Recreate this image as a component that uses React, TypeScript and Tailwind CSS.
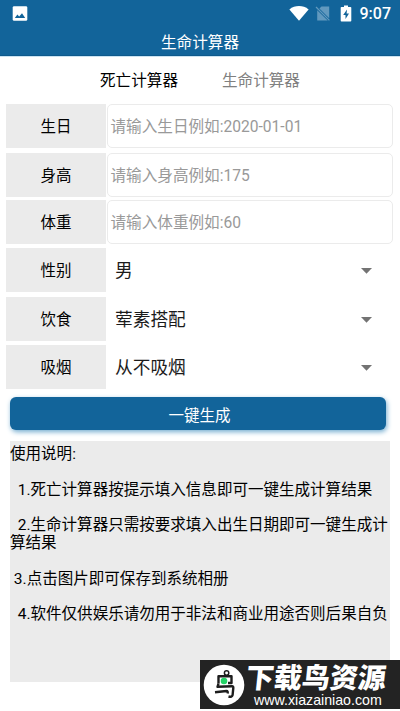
const inputs = [
    { label: "生日", hint: "请输入生日例如:2020-01-01" },
    { label: "身高", hint: "请输入身高例如:175" },
    { label: "体重", hint: "请输入体重例如:60" },
]

const selects = [
    { label: "性别", value: "男" },
    { label: "饮食", value: "荤素搭配" },
    { label: "吸烟", value: "从不吸烟" },
]

function StatusBar() {
    return (
        <div className="flex h-7 items-center pl-[12px] pr-[9px] text-white">
            <svg className="h-4 w-4" viewBox="0 0 16 16">
                <rect x="0.7" y="0.2" width="14.6" height="14.6" rx="1.4" fill="#fff" />
                <path d="M2.8 12 L5.4 8.6 L7.2 10.6 L10 7.2 L13.2 12 Z" fill="#12649a" />
            </svg>
            <svg className="ml-auto h-4 w-5" viewBox="0 0 20 16">
                <path d="M0.4 3.4 C6 -1 14 -1 19.6 3.4 L10 14.8 Z" fill="#fff" />
            </svg>
            <svg className="ml-[6px] h-4 w-4" viewBox="0 0 16 16">
                <path d="M6.5 0.4 H14.2 V12.2 L4.4 2.4 Z M2.2 4.2 L12.7 14.5 H2.2 Z" fill="#6299be" />
                <path d="M1 1 L14.4 14.4" stroke="#6299be" strokeWidth="1.2" />
            </svg>
            <svg className="mb-[2px] ml-[9px] h-[17px] w-3" viewBox="0 0 12 17">
                <path d="M1.5 2 H4 V0.4 H8 V2 H10.5 Q11.3 2 11.3 2.8 V15.7 Q11.3 16.5 10.5 16.5 H1.5 Q0.7 16.5 0.7 15.7 V2.8 Q0.7 2 1.5 2 Z" fill="#fff" />
                <path d="M7 4.5 L3.2 10 H5.5 V14 L9 8.6 H6.6 Z" fill="#12649a" />
            </svg>
            <span className="ml-[8px] font-[Roboto] text-[16px] font-medium leading-none">9:07</span>
        </div>
    )
}

function Label({ text }: { text: string }) {
    return <div className="flex h-11 w-[100px] items-center justify-center bg-[#ebebeb] pt-[3px] text-[15.5px]">{text}</div>
}

function Form() {
    return (
        <div className="grid h-[285px] grid-rows-[49px_47px_48px_49px_48px_44px] pl-[6px] pr-[7px]">
            {inputs.map((row) => (
                <div key={row.label} className="flex">
                    <Label text={row.label} />
                    <div className="ml-px flex h-11 flex-1 items-center rounded-[5px] border border-[#ebebeb] pl-[2.5px] pt-[3px] text-[15.6px] text-[#999]">{row.hint}</div>
                </div>
            ))}
            {selects.map((row) => (
                <div key={row.label} className="flex">
                    <Label text={row.label} />
                    <div className="flex h-11 flex-1 items-center justify-between pl-[9px] pr-[21px] pt-[2px] text-[17.7px] text-[#1b1b1b]">
                        {row.value}
                        <svg className="h-[6px] w-[11px]" viewBox="0 0 11 6">
                            <path d="M0 0 H11 L5.5 5.7 Z" fill="#737373" />
                        </svg>
                    </div>
                </div>
            ))}
        </div>
    )
}

function Watermark() {
    return (
        <div className="absolute left-[200px] top-[660px] flex h-[49px] w-[200px] items-center bg-[#232323] text-white">
            <svg className="ml-[3px] h-[42px] w-[42px] shrink-0" viewBox="0 0 42 42">
                <circle cx="21" cy="21" r="20.3" fill="#fff" />
                <g fill="none" stroke="#1d1d1d" strokeWidth="2.4" strokeLinejoin="round">
                    <path d="M15.5 19.5 V12.2 H28.5 V19 H25" />
                    <circle cx="23.6" cy="9" r="2.2" strokeWidth="1.5" />
                    <path d="M15.5 19.5 L14.5 22.8 L29 22.2 Q30.5 22.3 30.3 24 L29.6 31 Q29 33.5 25.5 32.5" />
                    <path d="M12 28.2 L23.5 27 Q25.2 27 24.6 29.5" />
                </g>
                <circle cx="21" cy="17" r="3.3" fill="#23d366" />
            </svg>
            <div className="ml-px mt-[2px] flex flex-col">
                <div className="origin-left -skew-x-6 whitespace-nowrap text-[28px] font-black leading-[29px]">下载鸟资源</div>
                <div className="whitespace-nowrap pl-[8px] font-['Liberation_Sans'] text-[14.2px] leading-[15px]">www.xiazainiao.com</div>
            </div>
        </div>
    )
}

export default function App() {
    return (
        <main className="relative h-[711px] w-[400px] overflow-hidden bg-white font-[Roboto,'Noto_Sans_CJK_SC',sans-serif] text-black">
            <header className="h-14 border-b border-[#0e5a8c] bg-[#12649a]">
                <StatusBar />
                <h1 className="pt-px text-center text-[15.6px] leading-7 text-white">生命计算器</h1>
            </header>

            <nav className="flex h-12 items-center gap-[44px] border-t border-[#cbe3f2] pl-[100px] pt-[2px] text-[15.6px]">
                <span>死亡计算器</span>
                <span className="text-[#808080]">生命计算器</span>
            </nav>

            <Form />

            <button className="ml-[10px] mt-2 block h-[33px] w-[376px] rounded-[6px] bg-[#12649a] pl-[3px] pt-[5px] text-[15.5px] leading-[28px] text-white shadow-[1px_2px_5px_#75add0]">一键生成</button>

            {/* usage notes */}
            <section className="ml-[10px] mt-[11px] h-[241px] w-[380px] whitespace-pre bg-[#ebebeb] pt-[5px] text-[15.54px] leading-[17.8px]">
                <p>使用说明:</p>
                <p className="mt-[17.8px]">{"  1.死亡计算器按提示填入信息即可一键生成计算结果"}</p>
                <p className="mt-[17.8px]">{"  2.生命计算器只需按要求填入出生日期即可一键生成计\n算结果"}</p>
                <p className="mt-[17.8px]">{" 3.点击图片即可保存到系统相册"}</p>
                <p className="mt-[17.8px]">{"  4.软件仅供娱乐请勿用于非法和商业用途否则后果自负"}</p>
            </section>

            <Watermark />
        </main>
    )
}
